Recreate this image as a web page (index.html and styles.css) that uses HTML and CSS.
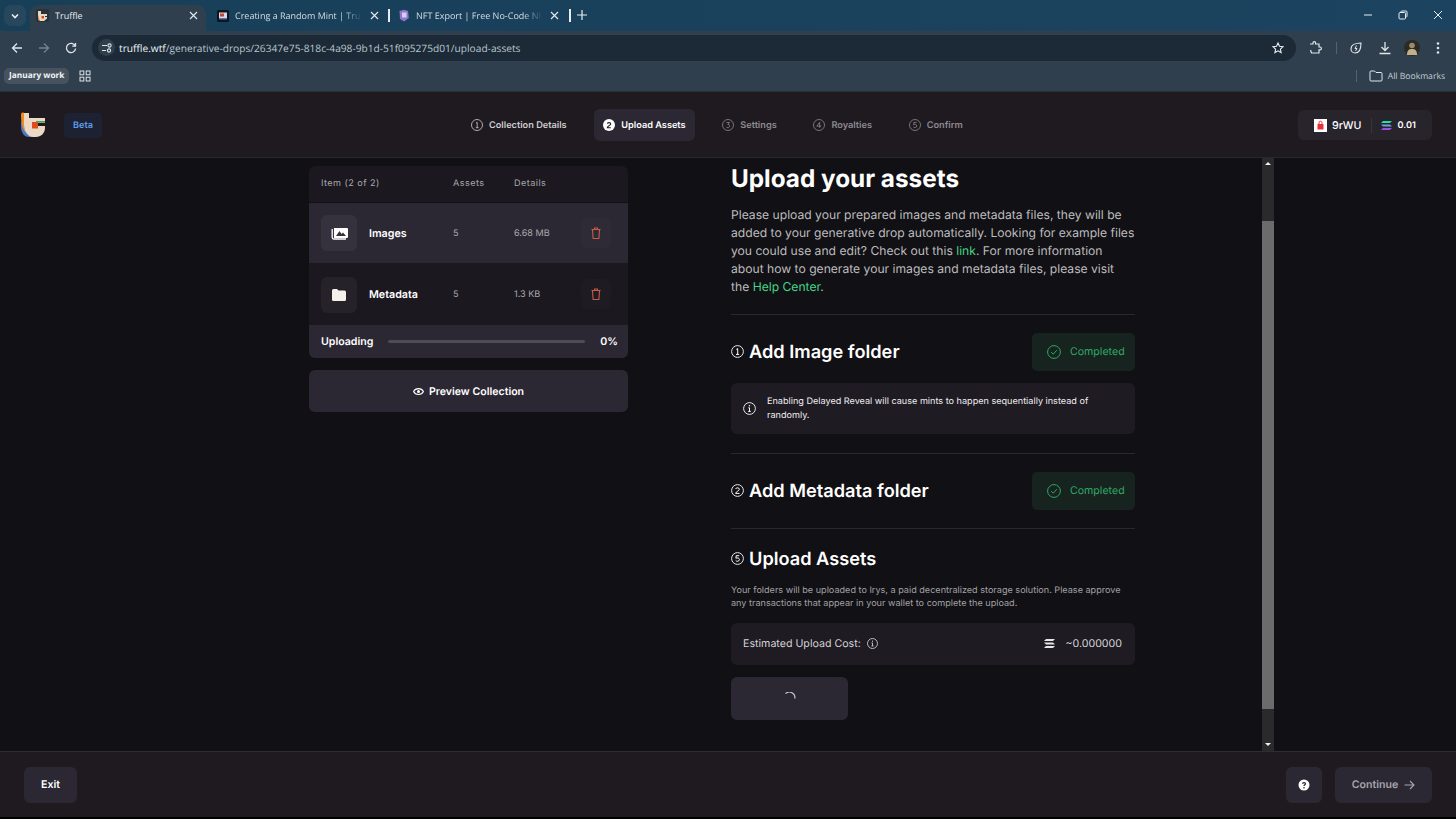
FILE: index.html
```html
<!DOCTYPE html>
<html lang="en">
<head>
<meta charset="utf-8">
<title>Truffle</title>
<link rel="stylesheet" href="styles.css">
</head>
<body>
<div class="browser">
  <div class="tabstrip">
    <div class="tabmenu"><svg width="10" height="10" viewBox="0 0 10 10"><path d="M2 3.500 5 6.500 8 3.500" fill="none" stroke="#e8edf0" stroke-width="1.600"/></svg></div>
    <div class="tab active">
      <svg class="fav" width="13" height="13" viewBox="0 0 13 13"><rect width="13" height="13" rx="2" fill="#26323c"/><path d="M2 2h3v3h6v2H9v1h2v1.500L8 12H4L2 10z" fill="#e9d8c4"/><path d="M2 6v5l2 1z" fill="#e8832a"/><rect x="5.500" y="7" width="2.500" height="2.500" fill="#d9481f"/></svg>
      <span class="tabtitle">Truffle</span>
      <svg class="tabx" width="9" height="9" viewBox="0 0 9 9"><path d="M1 1l7 7M8 1 1 8" stroke="#dfe6ea" stroke-width="1.200"/></svg>
    </div>
    <div class="tab second">
      <svg class="fav" width="12" height="12" viewBox="0 0 12 12"><rect width="12" height="12" rx="1.500" fill="#0e1420"/><rect x="2" y="2.500" width="8" height="6" fill="#d9d9e6"/><rect x="3" y="3.500" width="4" height="3" fill="#c8452f"/><rect x="2" y="8.500" width="8" height="1" fill="#3f73c9"/></svg>
      <span class="tabtitle fade">Creating a Random Mint | Truffle</span>
      <svg class="tabx" width="9" height="9" viewBox="0 0 9 9"><path d="M1 1l7 7M8 1 1 8" stroke="#dfe6ea" stroke-width="1.200"/></svg>
    </div>
    <i class="tabsep"></i>
    <div class="tab third">
      <svg class="fav" width="12" height="13" viewBox="0 0 12 13"><path d="M1.500 2 6 .8l4 1.200.8 7L6 12.500 2 10z" fill="#8d78c9"/><path d="M4 3.500h4.500v5H4z" fill="#d7cdf0"/></svg>
      <span class="tabtitle fade">NFT Export | Free No-Code NFT</span>
      <svg class="tabx" width="9" height="9" viewBox="0 0 9 9"><path d="M1 1l7 7M8 1 1 8" stroke="#dfe6ea" stroke-width="1.200"/></svg>
    </div>
    <i class="tabsep"></i>
    <svg class="newtab" width="10" height="10" viewBox="0 0 10 10"><path d="M5 0v10M0 5h10" stroke="#e8edf0" stroke-width="1.200"/></svg>
    <div class="winctl">
      <svg width="10" height="10" viewBox="0 0 10 10"><path d="M1 5h8" stroke="#e8edf0" stroke-width="1"/></svg>
      <svg width="10" height="10" viewBox="0 0 10 10"><rect x="1" y="2.500" width="6.500" height="6.500" rx="1" fill="none" stroke="#e8edf0"/><path d="M3 2.500V1.500a.8.800 0 0 1 .8-.5H8a1 1 0 0 1 1 1v4.300a.8.800 0 0 1-.8.700" fill="none" stroke="#e8edf0"/></svg>
      <svg width="10" height="10" viewBox="0 0 10 10"><path d="M1 1l8 8M9 1 1 9" stroke="#e8edf0" stroke-width="1"/></svg>
    </div>
  </div>
  <div class="toolbar">
    <svg class="navicon" width="12" height="12" viewBox="0 0 12 12"><path d="M11 6H1.500M6 1.500 1.500 6 6 10.500" fill="none" stroke="#dfe6ea" stroke-width="1.300"/></svg>
    <svg class="navicon" width="12" height="12" viewBox="0 0 12 12"><path d="M1 6h9.500M6 1.500 10.500 6 6 10.500" fill="none" stroke="#76838e" stroke-width="1.300"/></svg>
    <svg class="navicon" width="12" height="12" viewBox="0 0 12 12"><path d="M10.200 4A4.600 4.600 0 1 0 10.600 6.500M10.500 1v3.200H7.300" fill="none" stroke="#dfe6ea" stroke-width="1.300"/></svg>
    <div class="omnibox">
      <span class="sitechip"><svg width="12" height="12" viewBox="0 0 12 12"><path d="M1 3.500h5M1 8.500h4" stroke="#dfe6ea" stroke-width="1.100"/><circle cx="8.500" cy="3.500" r="1.600" fill="none" stroke="#dfe6ea" stroke-width="1.100"/><circle cx="8" cy="8.500" r="1.600" fill="none" stroke="#dfe6ea" stroke-width="1.100"/></svg></span>
      <span class="url"><b>truffle.wtf</b>/generative-drops/26347e75-818c-4a98-9b1d-51f095275d01/upload-assets</span>
      <svg class="star" width="12" height="12" viewBox="0 0 12 12"><path d="M6 1l1.500 3.300 3.500.4-2.600 2.400.7 3.500L6 8.800l-3.100 1.800.7-3.500L1 4.700l3.500-.4z" fill="none" stroke="#e8edf0" stroke-width="1.100"/></svg>
    </div>
    <svg class="tool ext" width="14" height="14" viewBox="0 0 14 14"><path d="M2 3h3V2a1.300 1.300 0 0 1 2.600 0v1H11v3h1a1.400 1.400 0 0 1 0 2.800h-1V12H3.500L2.500 9" fill="none" stroke="#dfe6ea" stroke-width="1.200"/></svg>
    <i class="toolsep"></i>
    <svg class="tool" width="14" height="14" viewBox="0 0 14 14"><path d="M2 8c0-4 4-6 10-6 0 6-2 10-6 10-2.500 0-4-2-4-4z" fill="none" stroke="#dfe6ea" stroke-width="1.100"/><path d="M7.500 4.500 6 7.500h2L6.500 10" fill="none" stroke="#dfe6ea"/></svg>
    <svg class="tool" width="14" height="14" viewBox="0 0 14 14"><path d="M7 1v8M3.500 6 7 9.500 10.500 6M1.500 12.500h11" fill="none" stroke="#dfe6ea" stroke-width="1.300"/></svg>
    <svg class="tool avatar" width="16" height="16" viewBox="0 0 16 16"><circle cx="8" cy="8" r="8" fill="#2b2a25"/><circle cx="8" cy="5.500" r="2.800" fill="#9c8a6e"/><path d="M3 15c0-5 2-6 5-6s5 1 5 6z" fill="#c4ae8a"/></svg>
    <svg class="tool dots" width="4" height="12" viewBox="0 0 4 12"><circle cx="2" cy="1.500" r="1.300" fill="#dfe6ea"/><circle cx="2" cy="6" r="1.300" fill="#dfe6ea"/><circle cx="2" cy="10.500" r="1.300" fill="#dfe6ea"/></svg>
  </div>
  <div class="bookmarks">
    <span class="bookmark">January work</span>
    <svg class="apps" width="12" height="12" viewBox="0 0 12 12"><g fill="none" stroke="#dfe6ea"><rect x="1" y="1" width="3.800" height="3.800"/><rect x="7.200" y="1" width="3.800" height="3.800"/><rect x="1" y="7.200" width="3.800" height="3.800"/><rect x="7.200" y="7.200" width="3.800" height="3.800"/></g></svg>
    <i class="toolsep bmsep"></i>
    <svg width="14" height="12" viewBox="0 0 14 12"><path d="M1 2a1 1 0 0 1 1-1h3.500l1.500 1.500h5a1 1 0 0 1 1 1V10a1 1 0 0 1-1 1H2a1 1 0 0 1-1-1z" fill="none" stroke="#dfe6ea"/></svg>
    <span class="allbm">All Bookmarks</span>
  </div>
</div>

<header class="apphead">
  <div class="brand">
    <svg class="logo" width="27" height="26" viewBox="0 0 27 26">
      <path d="M1 9v6c0 5 3 10 8 10h5c-5-1-9-6-10-12z" fill="#4a76c9"/>
      <path d="M1 2c0-1 2-2 3-1v15l2 5C2 17 1 9 1 2z" fill="#ef8b22"/>
      <path d="M4 1h5v5h16v5h-8v3h8v2c0 5-4 9-9 9h-3c-5 0-9-6-9-12z" fill="#ecd9c5"/>
      <rect x="12" y="10" width="6" height="6.500" fill="#de4c1c"/>
      <rect x="16" y="9" width="9" height="1.700" fill="#4f9a62"/>
    </svg>
    <span class="beta">Beta</span>
  </div>
  <nav class="steps">
    <a class="step done"><svg class="num" width="12" height="12" viewBox="0 0 12 12"><circle cx="6" cy="6" r="5.500" fill="none" stroke="currentColor" stroke-width=".8"/><path d="M5 4l1.200-.7v5.400M4.800 8.700h2.800" fill="none" stroke="currentColor" stroke-width=".8"/></svg>Collection Details</a>
    <a class="step current"><svg class="num" width="12" height="12" viewBox="0 0 12 12"><circle cx="6" cy="6" r="6" fill="#fff"/><path d="M4.300 4.700C4.500 3.200 7.700 3.200 7.700 4.900 7.700 6.300 4.500 7 4.300 8.700h3.500" fill="none" stroke="#1e1a20" stroke-width="1.100"/></svg>Upload Assets</a>
    <a class="step"><svg class="num" width="12" height="12" viewBox="0 0 12 12"><circle cx="6" cy="6" r="5.500" fill="none" stroke="currentColor" stroke-width=".8"/><path d="M4.500 3.500h3L5.800 5.500C8.500 5.500 8 8.700 5.900 8.700 5 8.700 4.500 8.300 4.300 7.800" fill="none" stroke="currentColor" stroke-width=".8"/></svg>Settings</a>
    <a class="step"><svg class="num" width="12" height="12" viewBox="0 0 12 12"><circle cx="6" cy="6" r="5.500" fill="none" stroke="currentColor" stroke-width=".8"/><path d="M6.700 8.800V3.300L3.800 7.200h4.500" fill="none" stroke="currentColor" stroke-width=".8"/></svg>Royalties</a>
    <a class="step"><svg class="num" width="12" height="12" viewBox="0 0 12 12"><circle cx="6" cy="6" r="5.500" fill="none" stroke="currentColor" stroke-width=".8"/><path d="M7.600 3.400H4.900L4.600 5.700C6 5 7.800 5.600 7.700 7 7.600 8.800 5 9.200 4.300 7.800" fill="none" stroke="currentColor" stroke-width=".8"/></svg>Confirm</a>
  </nav>
  <div class="wallet">
    <svg width="13" height="13" viewBox="0 0 13 13"><rect width="13" height="13" fill="#fff"/><rect x="3.500" y="5" width="6" height="5.500" fill="#e6303a"/><path d="M5 5V3.700a1.500 1.500 0 0 1 3 0V5" fill="none" stroke="#e6303a"/></svg>
    <span class="addr">9rWU</span>
    <i class="walletsep"></i>
    <svg width="11" height="9" viewBox="0 0 11 9"><path d="M2 0h9L9 2H0z" fill="#19e6a4"/><path d="M0 3.500h9l2 2H2z" fill="#6f9ae6"/><path d="M2 7h9L9 9H0z" fill="#a04ee8"/></svg>
    <span class="bal">0.01</span>
  </div>
</header>

<main class="stage">
  <section class="leftcol">
    <div class="filecard">
      <div class="filehead">
        <span class="c-item">Item (2 of 2)</span><span class="c-assets">Assets</span><span class="c-details">Details</span>
      </div>
      <div class="filerow hi">
        <span class="thumb"><svg width="17" height="14" viewBox="0 0 17 14"><path d="M3 2h13a1 1 0 0 1 1 1v8a1 1 0 0 1-1 1H3z" fill="#fff"/><path d="M5 10l3.500-5 2 3 1.500-1.500L15 10z" fill="#35313d"/><path d="M1.200 3v8.500a1.500 1.500 0 0 0 1.500 1.500H15" fill="none" stroke="#fff" stroke-width="1.300"/></svg></span>
        <b class="fname">Images</b><span class="c-assets">5</span><span class="c-details">6.68 MB</span>
        <span class="trash"><svg width="10" height="12" viewBox="0 0 10 12"><path d="M.5 2.500h9M3.500 2.500V1h3v1.500M1.500 2.500l.6 9h5.800l.6-9" fill="none" stroke="#c75c48" stroke-width="1.100"/></svg></span>
      </div>
      <div class="filerow">
        <span class="thumb"><svg width="14" height="12" viewBox="0 0 14 12"><path d="M0 1.500A1.500 1.500 0 0 1 1.500 0H5l1.500 1.500h6A1.500 1.500 0 0 1 14 3v7.500a1.500 1.500 0 0 1-1.500 1.500h-11A1.500 1.500 0 0 1 0 10.500z" fill="#f4f1ea"/></svg></span>
        <b class="fname">Metadata</b><span class="c-assets">5</span><span class="c-details">1.3 KB</span>
        <span class="trash"><svg width="10" height="12" viewBox="0 0 10 12"><path d="M.5 2.500h9M3.500 2.500V1h3v1.500M1.500 2.500l.6 9h5.800l.6-9" fill="none" stroke="#c75c48" stroke-width="1.100"/></svg></span>
      </div>
      <div class="progress">
        <b>Uploading</b><span class="bar"></span><b>0%</b>
      </div>
    </div>
    <button class="preview"><svg width="11" height="9" viewBox="0 0 11 9"><path d="M.6 4.500C2.500.6 8.500.6 10.400 4.500 8.500 8.400 2.500 8.400.6 4.500z" fill="none" stroke="#fff" stroke-width="1.100"/><circle cx="5.500" cy="4.500" r="1.500" fill="#fff"/></svg>Preview Collection</button>
  </section>

  <section class="rightcol">
    <h1>Upload your assets</h1>
    <p class="intro">Please upload your prepared images and metadata files, they will be added to your generative drop automatically. Looking for example files you could use and edit? Check out this <a>link</a>. For more information about how to generate your images and metadata files, please visit the <a>Help Center</a>.</p>

    <div class="sect first">
      <div class="secthead">
        <h2><svg width="13" height="13" viewBox="0 0 13 13"><circle cx="6.500" cy="6.500" r="5.900" fill="none" stroke="#fff" stroke-width=".9"/><path d="M5.300 4.400l1.400-.8v5.800M5 9.400h3.200" fill="none" stroke="#fff"/></svg>Add Image folder</h2>
        <span class="chip"><svg width="14" height="14" viewBox="0 0 14 14"><circle cx="7" cy="7" r="6.400" fill="none" stroke="#2fa866"/><path d="M4.200 7.200l2 2 3.600-4" fill="none" stroke="#2fa866"/></svg>Completed</span>
      </div>
      <div class="note"><svg width="13" height="13" viewBox="0 0 13 13"><circle cx="6.500" cy="6.500" r="5.900" fill="none" stroke="#fff" stroke-width=".9"/><path d="M6.500 5.800v3.600M5.300 5.800h1.200M5.200 9.400h2.600" fill="none" stroke="#fff"/><circle cx="6.500" cy="3.700" r=".7" fill="#fff"/></svg><span>Enabling Delayed Reveal will cause mints to happen sequentially instead of randomly.</span></div>
    </div>

    <div class="sect middle">
      <div class="secthead">
        <h2><svg width="13" height="13" viewBox="0 0 13 13"><circle cx="6.500" cy="6.500" r="5.900" fill="none" stroke="#fff" stroke-width=".9"/><path d="M4.600 5C4.800 3.400 8.400 3.400 8.400 5.200 8.400 6.800 4.900 7.500 4.600 9.400h3.900" fill="none" stroke="#fff"/></svg>Add Metadata folder</h2>
        <span class="chip"><svg width="14" height="14" viewBox="0 0 14 14"><circle cx="7" cy="7" r="6.400" fill="none" stroke="#2fa866"/><path d="M4.200 7.200l2 2 3.600-4" fill="none" stroke="#2fa866"/></svg>Completed</span>
      </div>
    </div>

    <div class="sect last">
      <h2 class="plain"><svg width="13" height="13" viewBox="0 0 13 13"><circle cx="6.500" cy="6.500" r="5.900" fill="none" stroke="#fff" stroke-width=".9"/><path d="M8.300 3.700H5.200L4.900 6.200C6.400 5.500 8.500 6 8.400 7.600 8.300 9.500 5.400 9.900 4.700 8.400" fill="none" stroke="#fff"/></svg>Upload Assets</h2>
      <p class="small">Your folders will be uploaded to Irys, a paid decentralized storage solution. Please approve any transactions that appear in your wallet to complete the upload.</p>
      <div class="cost">
        <span class="costlabel">Estimated Upload Cost:<svg width="11" height="11" viewBox="0 0 13 13"><circle cx="6.500" cy="6.500" r="5.900" fill="none" stroke="#d6d5d8"/><path d="M6.500 5.800v3.600M5.300 5.800h1.200M5.200 9.400h2.600" fill="none" stroke="#d6d5d8"/><circle cx="6.500" cy="3.700" r=".7" fill="#d6d5d8"/></svg></span>
        <span class="costval"><svg width="11" height="9" viewBox="0 0 11 9"><path d="M2 0h9L9 2H0zM0 3.500h9l2 2H2zM2 7h9L9 9H0z" fill="#e6e6e6"/></svg>~0.000000</span>
      </div>
      <button class="spinbtn"><svg width="12" height="12" viewBox="0 0 12 12"><path d="M1.500 1.700A5.500 5.500 0 0 1 10.800 6.600" fill="none" stroke="#c9c8cc" stroke-width="1.100"/></svg></button>
    </div>
  </section>

  <div class="scrollbar">
    <span class="arrow up"></span>
    <span class="thumbbar"></span>
    <span class="arrow down"></span>
  </div>
</main>

<footer class="appfoot">
  <button class="exit">Exit</button>
  <div class="footright">
    <button class="help"><svg width="12" height="12" viewBox="0 0 12 12"><circle cx="6" cy="6" r="5.500" fill="#fff"/><path d="M4.500 4.700C4.600 3.300 7.500 3.300 7.500 4.800 7.500 5.800 6 5.900 6 7.100" fill="none" stroke="#2b2733" stroke-width="1.200"/><circle cx="6" cy="8.800" r=".8" fill="#2b2733"/></svg></button>
    <button class="continue">Continue<svg width="11" height="10" viewBox="0 0 11 10"><path d="M.5 5h9.500M6 1l4 4-4 4" fill="none" stroke="#a7a4ab" stroke-width="1.100"/></svg></button>
  </div>
</footer>
</body>
</html>
```
FILE: styles.css
```css
* { box-sizing: border-box; }
html, body { margin: 0; height: 100%; }
body {
  width: 1456px; height: 819px; overflow: hidden;
  background: #000; color: #fff;
  font-family: Inter, "Noto Sans", sans-serif;
  text-rendering: geometricPrecision;
  display: flex; flex-direction: column;
}
button { font-family: inherit; border: 0; cursor: pointer; text-rendering: geometricPrecision; }
svg { display: block; flex: none; }

/* browser chrome */
.browser { height: 92px; flex: none; font-family: "Open Sans", "Noto Sans", sans-serif; background: #2f3f4d; border-bottom: 1px solid #24303a; }
.tabstrip { height: 31px; background: linear-gradient(90deg, #183f58, #1c4460); display: flex; align-items: flex-end; padding-left: 4px; }
.tabmenu { width: 22px; height: 21px; margin-bottom: 5px; border-radius: 7px; background: #29475c; display: flex; align-items: center; justify-content: center; margin-right: 4px; }
.tab { height: 26px; display: flex; align-items: center; font-size: 9px; color: #d5dde2; padding-bottom: 5px; }
.tab.active { width: 176px; background: #2f3f4d; border-radius: 9px 9px 0 0; padding-left: 6px; padding-right: 8px; color: #e8edf0; }
.tab.second { width: 182px; padding-left: 11px; padding-right: 9px; }
.tab.third { width: 179px; padding-left: 8px; padding-right: 10px; }
.tab .fav { margin-right: 6px; }
.tabtitle { flex: 1; white-space: nowrap; overflow: hidden; }
.tabtitle.fade { -webkit-mask-image: linear-gradient(90deg, #000 85%, transparent); mask-image: linear-gradient(90deg, #000 85%, transparent); margin-right: 8px; }
.tabx { flex: none; }
.tabsep { width: 2px; height: 13px; background: #e8edf0; margin-bottom: 9px; flex: none; }
.newtab { margin: 0 0 11px 6px; }
.winctl { margin-left: auto; align-self: center; display: flex; gap: 25px; padding: 0 13px 2px 0; }

.toolbar { height: 32px; display: flex; align-items: center; padding: 1px 0 0 11px; }
.navicon { margin-right: 15px; }
.omnibox { width: 1204px; height: 26px; background: #1b2a36; border-radius: 13px; display: flex; align-items: center; margin-left: 0; padding: 0 12px 0 6px; }
.sitechip { width: 17px; height: 17px; border-radius: 50%; background: #2f3f4d; display: flex; align-items: center; justify-content: center; }
.url { margin-left: 4px; font-size: 10.180px; color: #b9c7d1; white-space: nowrap; }
.url b { font-weight: 400; color: #eef2f5; }
.star { margin-left: auto; }
.tool { margin-left: 15px; }
.ext { margin-left: 12px; }
.toolsep { width: 1px; height: 12px; background: #53626e; margin-left: 14px; margin-right: -3px; }
.avatar { margin-left: 12px; }
.dots { margin-left: 16px; }

.bookmarks { height: 28px; display: flex; align-items: center; padding: 0 0 3px 4px; }
.bookmark { height: 16px; border-radius: 5px; background: #46535f; padding: 0 5px; font-size: 8.300px; font-weight: 700; line-height: 16px; color: #f2f4f6; white-space: nowrap; }
.apps { margin-left: 10px; }
.bmsep { margin-left: auto; margin-right: 12px; }
.allbm { font-size: 8.600px; margin: 0 11px 0 5px; color: #c4cdd4; white-space: nowrap; }

/* app header */
.apphead { height: 66px; flex: none; background: #1e1a20; display: flex; align-items: center; padding: 1px 24px 0 20px; border-bottom: 1px solid #2a272d; }
.brand { width: 442px; flex: none; display: flex; align-items: center; }
.logo { margin-right: 17px; }
.beta { width: 38px; height: 25px; border-radius: 4px; background: #1c2231; color: #5f9ceb; font-size: 9.100px; font-weight: 600; display: flex; align-items: center; justify-content: center; }
.steps { display: flex; gap: 18.700px; }
.step { display: flex; align-items: center; gap: 6px; height: 32px; padding: 0 9px; border-radius: 6px; font-size: 9.200px; font-weight: 600; color: #8d8a90; white-space: nowrap; }
.step.done { color: #cfced1; }
.step.current { background: #2c2833; color: #fff; }
.wallet { margin-left: auto; width: 134px; height: 30px; border-radius: 6px; background: #28242c; display: flex; align-items: center; padding-left: 16px; }
.addr { font-size: 10.700px; font-weight: 500; margin-left: 5px; }
.walletsep { width: 1px; height: 15px; background: #38343c; margin: 0 9px; }
.bal { font-size: 9.100px; font-weight: 600; margin-left: 6px; }

/* stage */
.stage { height: 593px; flex: none; background: #111014; display: flex; align-items: flex-start; padding-left: 309px; overflow: hidden; }
.leftcol { width: 319px; flex: none; padding-top: 8px; }
.filecard { border-radius: 6px; overflow: hidden; background: #1b181f; }
.filehead { height: 37px; display: flex; align-items: center; padding: 0 0 2px 12px; font-size: 9.100px; letter-spacing: .45px; color: #a9a7ac; border-bottom: 1px solid #111014; }
.c-item { width: 132px; }
.c-assets { width: 61px; flex: none; }
.c-details { flex: none; }
.filerow { height: 61px; display: flex; align-items: center; padding-left: 12px; position: relative; font-size: 9.100px; color: #a9a7ac; }
.filerow.hi { background: #2c2833; border-bottom: 1px solid #1b181f; }
.thumb { width: 36px; height: 36px; border-radius: 6px; background: #26222a; display: flex; align-items: center; justify-content: center; margin-right: 12px; }
.hi .thumb { background: #35313d; }
.fname { width: 84px; flex: none; color: #fff; font-size: 10.700px; font-weight: 600; }
.trash { position: absolute; left: 272px; top: 50%; margin-top: -15.500px; width: 30px; height: 30px; border-radius: 6px; background: rgba(255,255,255,.015); display: flex; align-items: center; justify-content: center; }
.progress { height: 33px; background: #2c2833; display: flex; align-items: center; justify-content: space-between; padding: 0 13px 0 12px; font-size: 10.600px; }
.progress b { font-weight: 600; }
.bar { flex: none; width: 197px; height: 3px; background: #4e4b54; margin: 0 15px; border-radius: 2px; }
.preview { width: 319px; height: 42px; margin-top: 12px; border-radius: 6px; background: #2c2833; color: #fff; font-size: 10.600px; font-weight: 600; display: flex; align-items: center; justify-content: center; gap: 5px; }

.rightcol { width: 404px; flex: none; margin-left: 103px; margin-right: 127px; }
h1 { margin: 6px 0 0; font-size: 24.300px; line-height: 29px; font-weight: 700; }
.intro { margin: 12.500px 0 0; font-size: 12.130px; line-height: 18px; color: #bdbcbf; }
.intro a { color: #45d58a; }
.sect { border-top: 1px solid #2a272d; padding-top: 18px; }
.sect.first { margin-top: 18px; padding-bottom: 19px; }
.sect.middle { padding-bottom: 18px; }
.secthead { display: flex; align-items: center; justify-content: space-between; }
h2 { margin: 0; font-size: 18.200px; line-height: 38px; font-weight: 600; display: flex; align-items: center; gap: 5px; }
h2.plain { line-height: 24px; }
.chip { width: 103px; height: 38px; border-radius: 5px; background: #17231f; color: #2fa866; font-size: 10.600px; display: flex; align-items: center; gap: 9px; padding-left: 15px; }
.note { margin-top: 12px; height: 51px; border-radius: 6px; background: #1f1b23; display: flex; align-items: center; gap: 11px; padding: 1px 36px 0 12px; font-size: 9.100px; line-height: 13.500px; color: #f0eff1; }
.small { margin: 13px 0 0; font-size: 9.100px; line-height: 13.500px; color: #a3a2a5; }
.cost { margin-top: 12px; height: 42px; border-radius: 6px; background: #1f1b23; display: flex; align-items: center; justify-content: space-between; padding: 0 13px 0 12px; font-size: 10.650px; color: #d6d5d8; }
.costlabel { display: flex; align-items: center; gap: 6px; }
.costval { display: flex; align-items: center; gap: 10px; }
.spinbtn { margin-top: 12px; width: 117px; height: 43px; border-radius: 6px; background: #2c2833; display: flex; align-items: center; justify-content: center; }

.scrollbar { width: 12px; height: 593px; flex: none; background: #2a2a2c; display: flex; flex-direction: column; align-items: center; }
.arrow { width: 12px; height: 12px; flex: none; position: relative; }
.arrow::after { content: ""; position: absolute; left: 3px; border-left: 3px solid transparent; border-right: 3px solid transparent; }
.arrow.up::after { top: 4px; border-bottom: 3px solid #f0f0f0; }
.arrow.down::after { top: 4px; border-top: 3px solid #f0f0f0; }
.thumbbar { width: 12px; height: 488px; background: #6b6b6b; margin-top: 51px; }
.arrow.down { margin-top: auto; }

/* footer */
.appfoot { height: 66px; flex: none; background: #1e1a20; border-top: 1px solid #2e2b31; display: flex; align-items: center; justify-content: space-between; padding: 0 24px; }
.exit { width: 53px; height: 36px; border-radius: 6px; background: #2c2833; color: #fff; font-size: 10.600px; font-weight: 600; }
.footright { display: flex; gap: 13px; }
.help { width: 36px; height: 36px; border-radius: 6px; background: #2c2833; display: flex; align-items: center; justify-content: center; }
.continue { width: 97px; height: 36px; border-radius: 6px; background: #2c2833; color: #a7a4ab; font-size: 10.600px; font-weight: 600; display: flex; align-items: center; justify-content: center; gap: 6px; }
```
